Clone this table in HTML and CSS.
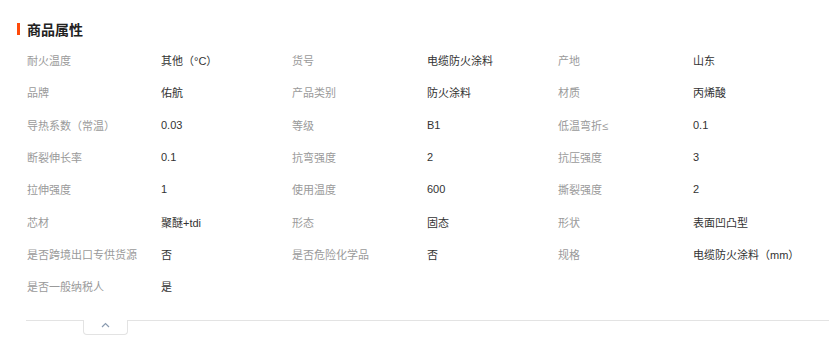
FILE: index.html
```html
<!DOCTYPE html>
<html lang="zh-CN">
<head>
<meta charset="utf-8">
<link rel="stylesheet" href="styles.css">
</head>
<body>
<section class="attrs">
  <h2 class="title">商品属性</h2>
  <div class="grid">
    <div class="k">耐火温度</div><div class="v">其他（°C）</div>
    <div class="k">货号</div><div class="v">电缆防火涂料</div>
    <div class="k">产地</div><div class="v">山东</div>

    <div class="k">品牌</div><div class="v">佑航</div>
    <div class="k">产品类别</div><div class="v">防火涂料</div>
    <div class="k">材质</div><div class="v">丙烯酸</div>

    <div class="k">导热系数（常温）</div><div class="v">0.03</div>
    <div class="k">等级</div><div class="v">B1</div>
    <div class="k">低温弯折≤</div><div class="v">0.1</div>

    <div class="k">断裂伸长率</div><div class="v">0.1</div>
    <div class="k">抗弯强度</div><div class="v">2</div>
    <div class="k">抗压强度</div><div class="v">3</div>

    <div class="k">拉伸强度</div><div class="v">1</div>
    <div class="k">使用温度</div><div class="v">600</div>
    <div class="k">撕裂强度</div><div class="v">2</div>

    <div class="k">芯材</div><div class="v">聚醚+tdi</div>
    <div class="k">形态</div><div class="v">固态</div>
    <div class="k">形状</div><div class="v">表面凹凸型</div>

    <div class="k">是否跨境出口专供货源</div><div class="v">否</div>
    <div class="k">是否危险化学品</div><div class="v">否</div>
    <div class="k">规格</div><div class="v">电缆防火涂料（mm）</div>

    <div class="k">是否一般纳税人</div><div class="v">是</div>
  </div>
  <div class="fold">
    <button class="toggle" type="button" aria-label="收起">
      <svg width="9" height="6" viewBox="0 0 9 6"><path d="M1 5 L4.5 1.5 L8 5" fill="none" stroke="#8a9bb0" stroke-width="1.2"/></svg>
    </button>
  </div>
</section>
</body>
</html>
```

FILE: styles.css
```css
html, body {
  margin: 0;
  padding: 0;
  background: #fff;
}
body {
  font-family: "Liberation Sans", "Noto Sans CJK SC", sans-serif;
  width: 829px;
  height: 338px;
  overflow: hidden;
}
.attrs {
  padding: 21px 0 0 17px;
}
.title {
  margin: 0;
  display: flex;
  align-items: center;
  height: 16px;
  font-size: 14px;
  font-weight: bold;
  color: #222;
  font-family: "Noto Sans CJK SC", sans-serif;
}
.title::before {
  content: "";
  width: 3px;
  height: 12px;
  background: #ff4a0a;
  margin-right: 7px;
}
.grid {
  margin: 7px 0 0 10px;
  display: grid;
  grid-template-columns: 134px 131px 135px 131px 135px 1fr;
  grid-auto-rows: 32.3px;
  font-size: 11px;
}
.k, .v {
  display: flex;
  align-items: center;
  white-space: nowrap;
}
.k {
  color: #9a9a9a;
}
.v {
  color: #333;
}
.fold {
  margin: 18px 0 0 9px;
  border-top: 1px solid #e3e3e3;
  height: 20px;
}
.toggle {
  display: flex;
  align-items: center;
  justify-content: center;
  margin: -1px 0 0 57px;
  width: 45px;
  height: 15px;
  padding: 0 0 4px 0;
  background: #fff;
  border: 1px solid #e3e3e3;
  border-top: none;
  border-radius: 0 0 4px 4px;
  cursor: pointer;
}
```
